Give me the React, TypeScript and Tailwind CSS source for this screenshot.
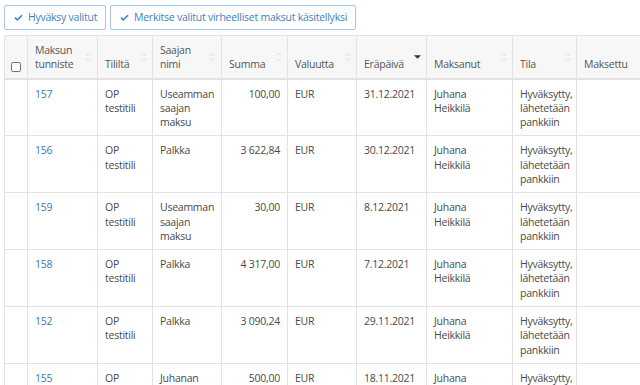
type Row = {
  id: string;
  account: string[];
  payee: string[];
  sum: string;
  currency: string;
  due: string;
  payer: string[];
  status: string[];
};

const status = ["Hyväksytty,", "lähetetään", "pankkiin"];
const payer = ["Juhana", "Heikkilä"];
const account = ["OP", "testitili"];

const rows: Row[] = [
  { id: "157", account, payee: ["Useamman", "saajan", "maksu"], sum: "100,00", currency: "EUR", due: "31.12.2021", payer, status },
  { id: "156", account, payee: ["Palkka"], sum: "3 622,84", currency: "EUR", due: "30.12.2021", payer, status },
  { id: "159", account, payee: ["Useamman", "saajan", "maksu"], sum: "30,00", currency: "EUR", due: "8.12.2021", payer, status },
  { id: "158", account, payee: ["Palkka"], sum: "4 317,00", currency: "EUR", due: "7.12.2021", payer, status },
  { id: "152", account, payee: ["Palkka"], sum: "3 090,24", currency: "EUR", due: "29.11.2021", payer, status },
  { id: "155", account, payee: ["Juhanan", "Sijoitus"], sum: "500,00", currency: "EUR", due: "18.11.2021", payer, status },
];

function Check() {
  return (
    <svg viewBox="0 0 12 10" className="w-[9px] h-[8px] shrink-0" fill="#3d7fc4">
      <path d="M0.6 5.2 L2 3.8 L4.4 6.1 L10 0.6 L11.4 2 L4.4 9 Z" />
    </svg>
  );
}

function SortIcon() {
  return (
    <svg viewBox="0 0 8 12" className="w-[7px] h-[10px]" fill="none" stroke="#d4d4d4" strokeWidth="1">
      <path d="M1 4.5 L4 1.5 L7 4.5" />
      <path d="M1 7.5 L4 10.5 L7 7.5" />
    </svg>
  );
}

function Lines({ lines }: { lines: string[] }) {
  return (
    <>
      {lines.map((l, i) => (
        <div key={i} className="whitespace-nowrap">
          {l}
        </div>
      ))}
    </>
  );
}

const headers: { label: string[]; sort: "desc" | "both" }[] = [
  { label: ["Maksun", "tunniste"], sort: "both" },
  { label: ["Tililtä"], sort: "both" },
  { label: ["Saajan", "nimi"], sort: "both" },
  { label: ["Summa"], sort: "both" },
  { label: ["Valuutta"], sort: "both" },
  { label: ["Eräpäivä"], sort: "desc" },
  { label: ["Maksanut"], sort: "both" },
  { label: ["Tila"], sort: "both" },
  { label: ["Maksettu"], sort: "both" },
];

const widths = ["w-[23px]", "w-[70px]", "w-[55px]", "w-[69px]", "w-[66px]", "w-[69px]", "w-[70px]", "w-[86px]", "w-[64px]", "w-[80px]"];

export default function App() {
  const td = "border border-[#e2e2e2] align-top pl-[7px] pr-[7px] pt-[7px] pb-[6px]";
  return (
    <div className="h-[385px] w-[640px] overflow-hidden bg-white font-['Open_Sans',sans-serif] text-[10.5px] tracking-[-0.25px] leading-[14.3px] text-[#4a4a4a]">
      <div className="flex gap-[4px] pl-[4px] pt-[5px]">
        <button className="flex h-[25px] w-[102px] items-center gap-[5px] rounded-[2px] border border-[#a8c6e6] bg-white pl-[9px] text-[#3f7fc1]">
          <Check />
          <span>Hyväksy valitut</span>
        </button>
        <button className="flex h-[25px] w-[246px] items-center gap-[5px] rounded-[2px] border border-[#a8c6e6] bg-white pl-[9px] text-[#3f7fc1]">
          <Check />
          <span>Merkitse valitut virheelliset maksut käsitellyksi</span>
        </button>
      </div>
      <div className="mt-[5px] pl-[4px]">
        <table className="table-fixed border-collapse w-[652px]">
          <colgroup>
            {widths.map((w, i) => (
              <col key={i} className={w} />
            ))}
          </colgroup>
          <thead>
            <tr className="h-[43px] bg-[#f7f7f7] text-[#555]">
              <th className="border border-[#e2e2e2] border-b-2 align-bottom pb-[6px]">
                <div className="mx-auto h-[10px] w-[10px] rounded-[2px] border border-[#767676] bg-white" />
              </th>
              {headers.map((h, i) => (
                <th
                  key={i}
                  className="relative border border-[#e2e2e2] border-b-2 align-bottom pl-[7px] pr-[14px] pb-[6px] text-left font-normal"
                >
                  <Lines lines={h.label} />
                  <span className="absolute right-[5px] top-[16px]">
                    {h.sort === "desc" ? (
                      <svg viewBox="0 0 8 4" className="w-[7px] h-[4px] mt-[3px]" fill="#333">
                        <path d="M0 0 H8 L4 4 Z" />
                      </svg>
                    ) : (
                      <SortIcon />
                    )}
                  </span>
                </th>
              ))}
            </tr>
          </thead>
          <tbody>
            {rows.map((r) => (
              <tr key={r.id} className="h-[56px]">
                <td className={td} />
                <td className={td}>
                  <span className="text-[#3b78b6]">{r.id}</span>
                </td>
                <td className={td}>
                  <Lines lines={r.account} />
                </td>
                <td className={td}>
                  <Lines lines={r.payee} />
                </td>
                <td className={`${td} text-right`}>{r.sum}</td>
                <td className={td}>{r.currency}</td>
                <td className={td}>{r.due}</td>
                <td className={td}>
                  <Lines lines={r.payer} />
                </td>
                <td className={td}>
                  <Lines lines={r.status} />
                </td>
                <td className={td} />
              </tr>
            ))}
          </tbody>
        </table>
      </div>
    </div>
  );
}
